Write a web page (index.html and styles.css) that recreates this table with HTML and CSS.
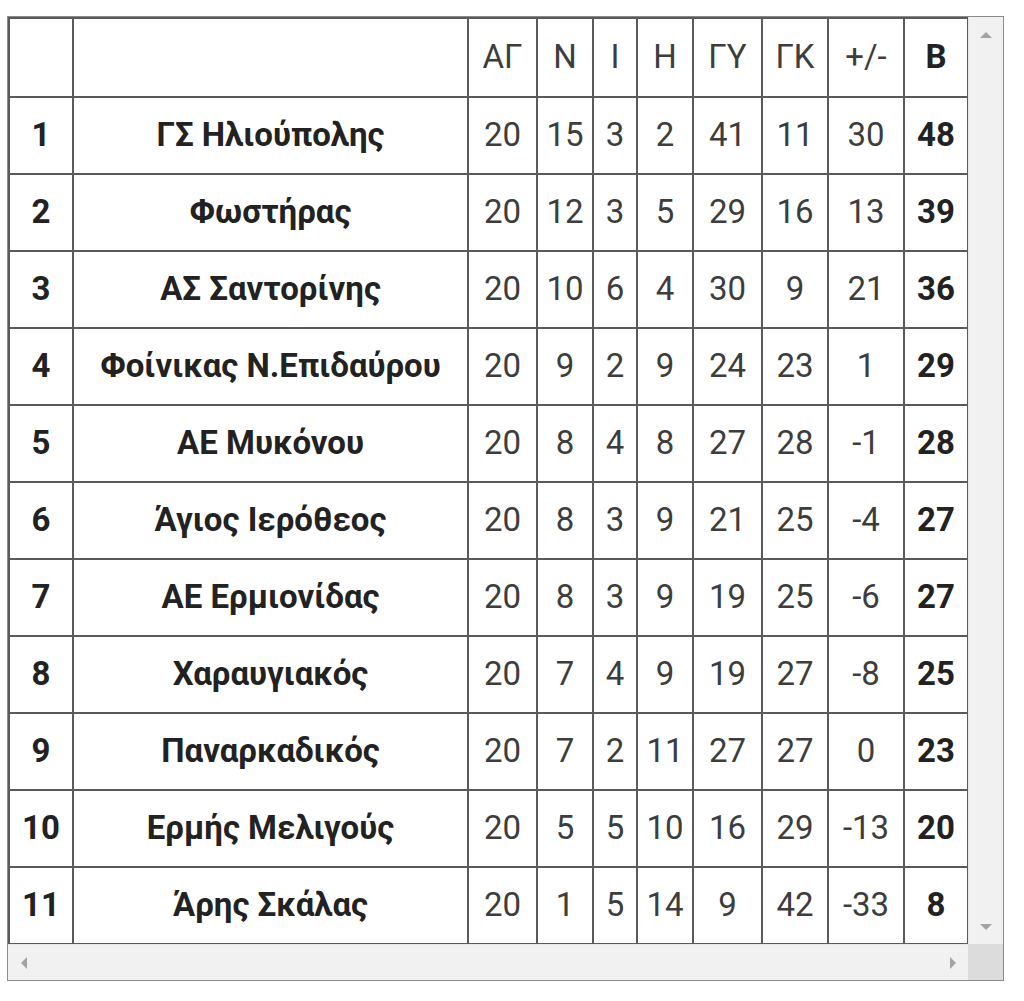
FILE: index.html
```html
<!DOCTYPE html>
<html lang="el">
<head>
<meta charset="utf-8">
<title>Βαθμολογία</title>
<link rel="stylesheet" href="styles.css">
</head>
<body>
<div class="page">
  <div class="scroller">
    <div class="table-area">
      <table class="standings">
        <colgroup>
          <col class="c-rank"><col class="c-team"><col class="c-ag"><col class="c-n"><col class="c-i"><col class="c-h"><col class="c-gy"><col class="c-gk"><col class="c-diff"><col class="c-pts">
        </colgroup>
        <thead>
          <tr><th></th><th></th><th>ΑΓ</th><th>Ν</th><th>Ι</th><th>Η</th><th>ΓΥ</th><th>ΓΚ</th><th>+/-</th><th class="b">Β</th></tr>
        </thead>
        <tbody>
          <tr><td class="b">1</td><td class="b">ΓΣ Ηλιούπολης</td><td>20</td><td>15</td><td>3</td><td>2</td><td>41</td><td>11</td><td>30</td><td class="b">48</td></tr>
          <tr><td class="b">2</td><td class="b">Φωστήρας</td><td>20</td><td>12</td><td>3</td><td>5</td><td>29</td><td>16</td><td>13</td><td class="b">39</td></tr>
          <tr><td class="b">3</td><td class="b">ΑΣ Σαντορίνης</td><td>20</td><td>10</td><td>6</td><td>4</td><td>30</td><td>9</td><td>21</td><td class="b">36</td></tr>
          <tr><td class="b">4</td><td class="b">Φοίνικας Ν.Επιδαύρου</td><td>20</td><td>9</td><td>2</td><td>9</td><td>24</td><td>23</td><td>1</td><td class="b">29</td></tr>
          <tr><td class="b">5</td><td class="b">ΑΕ Μυκόνου</td><td>20</td><td>8</td><td>4</td><td>8</td><td>27</td><td>28</td><td>-1</td><td class="b">28</td></tr>
          <tr><td class="b">6</td><td class="b">Άγιος Ιερόθεος</td><td>20</td><td>8</td><td>3</td><td>9</td><td>21</td><td>25</td><td>-4</td><td class="b">27</td></tr>
          <tr><td class="b">7</td><td class="b">ΑΕ Ερμιονίδας</td><td>20</td><td>8</td><td>3</td><td>9</td><td>19</td><td>25</td><td>-6</td><td class="b">27</td></tr>
          <tr><td class="b">8</td><td class="b">Χαραυγιακός</td><td>20</td><td>7</td><td>4</td><td>9</td><td>19</td><td>27</td><td>-8</td><td class="b">25</td></tr>
          <tr><td class="b">9</td><td class="b">Παναρκαδικός</td><td>20</td><td>7</td><td>2</td><td>11</td><td>27</td><td>27</td><td>0</td><td class="b">23</td></tr>
          <tr><td class="b">10</td><td class="b">Ερμής Μελιγούς</td><td>20</td><td>5</td><td>5</td><td>10</td><td>16</td><td>29</td><td>-13</td><td class="b">20</td></tr>
          <tr><td class="b">11</td><td class="b">Άρης Σκάλας</td><td>20</td><td>1</td><td>5</td><td>14</td><td>9</td><td>42</td><td>-33</td><td class="b">8</td></tr>
        </tbody>
      </table>
    </div>
    <div class="vbar">
      <span class="arrow up"></span>
      <span class="arrow down"></span>
    </div>
    <div class="hbar">
      <span class="arrow left"></span>
      <span class="arrow right"></span>
    </div>
    <div class="corner"></div>
  </div>
</div>
</body>
</html>
```

FILE: styles.css
```css
html, body {
  margin: 0;
  padding: 0;
  background: #ffffff;
}

.page {
  padding: 16px 0 0 7px;
}

.scroller {
  width: 997px;
  height: 965px;
  border: 1px solid #8a8a8a;
  box-sizing: border-box;
  display: grid;
  grid-template-columns: 960px 1fr;
  grid-template-rows: 927px 1fr;
  background: #ffffff;
}

.table-area {
  min-width: 0;
}

.standings {
  border-collapse: collapse;
  table-layout: fixed;
  width: 959px;
  font-family: Roboto, "Noto Sans", sans-serif;
  font-size: 33px;
  color: #3d3d3d;
}

.c-rank { width: 64px; }
.c-team { width: 395px; }
.c-ag { width: 69px; }
.c-n { width: 56px; }
.c-i { width: 44px; }
.c-h { width: 56px; }
.c-gy { width: 69px; }
.c-gk { width: 66px; }
.c-diff { width: 76px; }
.c-pts { width: 64px; }

.standings th,
.standings td {
  border: 2px solid #5a5a5a;
  text-align: center;
  vertical-align: middle;
  padding: 0 0 3px;
  font-weight: 400;
  white-space: nowrap;
  overflow: hidden;
}

.standings thead tr {
  height: 79px;
}

.standings tbody tr {
  height: 77px;
}

.standings .b {
  font-weight: 700;
  color: #222222;
}

.vbar {
  background: #f1f1f1;
  border-left: 1px solid #e6e6e6;
  display: flex;
  flex-direction: column;
  justify-content: space-between;
  align-items: center;
  padding: 15px 0 14px;
}

.hbar {
  background: #f1f1f1;
  border-top: 1px solid #e6e6e6;
  display: flex;
  justify-content: space-between;
  align-items: center;
  padding: 0 12px 0 13px;
}

.corner {
  background: #dcdcdc;
}

.arrow {
  width: 0;
  height: 0;
  display: block;
}

.arrow.up {
  border-left: 6px solid transparent;
  border-right: 6px solid transparent;
  border-bottom: 6px solid #a3a3a3;
}

.arrow.down {
  border-left: 6px solid transparent;
  border-right: 6px solid transparent;
  border-top: 6px solid #a3a3a3;
}

.arrow.left {
  border-top: 6px solid transparent;
  border-bottom: 6px solid transparent;
  border-right: 6px solid #a3a3a3;
}

.arrow.right {
  border-top: 6px solid transparent;
  border-bottom: 6px solid transparent;
  border-left: 6px solid #a3a3a3;
}
```
